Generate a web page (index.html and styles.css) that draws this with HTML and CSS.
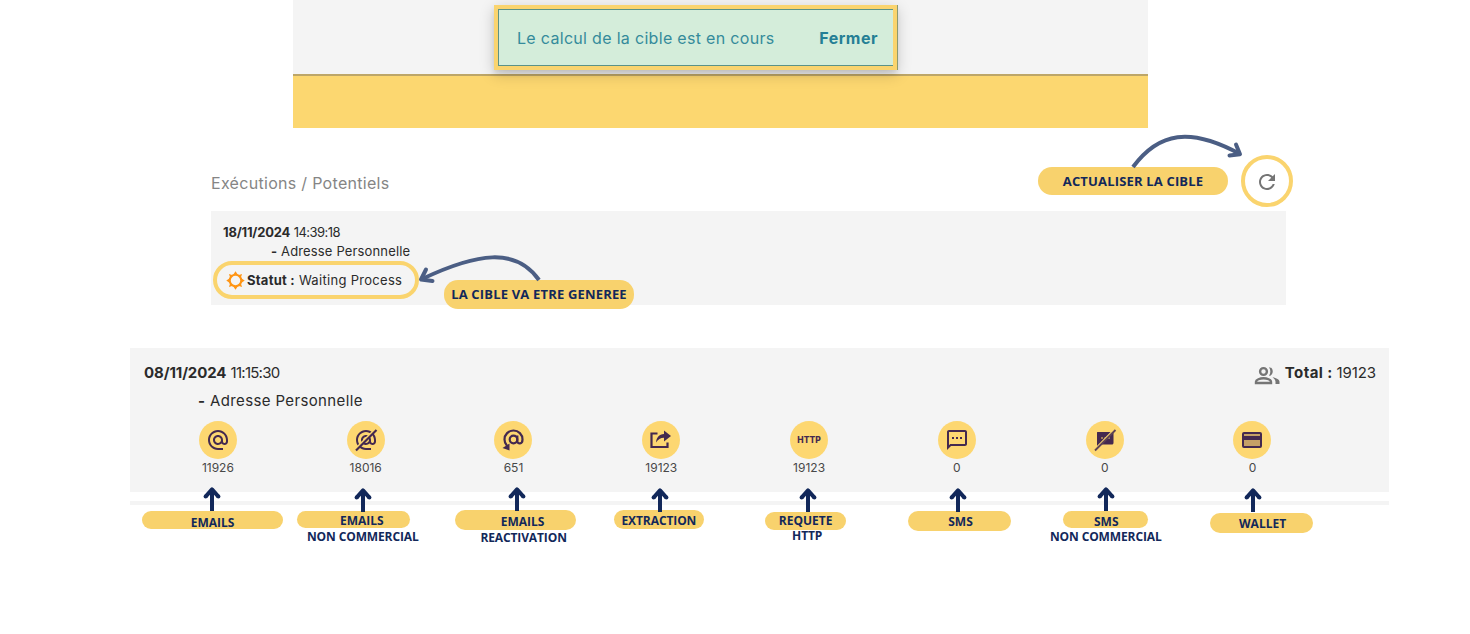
FILE: index.html
```html
<!DOCTYPE html>
<html lang="fr">
<head>
    <meta charset="UTF-8">
    <meta name="viewport" content="width=device-width, initial-scale=1.0">
    <title>Calcul de la cible</title>
    <link rel="stylesheet" href="styles.css">
</head>
<body>
    <svg width="0" height="0" class="sprite">
        <symbol id="arrow-up" viewBox="0 0 18 24">
            <path d="M9 24V3M2.6 9.6L9 2.4l6.4 7.2" fill="none" stroke="#12285a" stroke-width="4" stroke-linejoin="round"/>
            <circle cx="2.6" cy="9.6" r="2" fill="#12285a"/>
            <circle cx="15.4" cy="9.6" r="2" fill="#12285a"/>
        </symbol>
    </svg>

    <div class="banner">
        <div class="toast">
            <div class="toast-body">
                <span class="toast-text">Le calcul de la cible est en cours</span>
                <span class="toast-close">Fermer</span>
            </div>
        </div>
    </div>

    <section class="executions">
        <div class="executions-head">
            <h2>Exécutions / Potentiels</h2>
            <div class="tag tag-refresh">ACTUALISER LA CIBLE</div>
            <div class="refresh">
                <svg width="24" height="24" viewBox="0 0 24 24"><path fill="#757575" d="M17.65 6.35C16.2 4.9 14.21 4 12 4c-4.42 0-7.99 3.58-7.99 8s3.57 8 7.99 8c3.73 0 6.84-2.55 7.73-6h-2.08c-.82 2.33-3.04 4-5.65 4-3.31 0-6-2.69-6-6s2.69-6 6-6c1.66 0 3.14.69 4.22 1.78L13 11h7V4l-2.35 2.35z"/></svg>
            </div>
            <svg class="curve curve-refresh" width="120" height="40" viewBox="0 0 120 40" fill="none" stroke="#4b5e84" stroke-width="4">
                <path d="M8 37C34 2 65 -3 115 24"/>
                <path d="M111 14.5l4 9.700-10.500 1.200" stroke-linecap="round" stroke-linejoin="round"/>
            </svg>
        </div>
        <div class="panel waiting">
            <div class="run-date"><b>18/11/2024</b> <span>14:39:18</span></div>
            <div class="run-name"><b>-</b> <span>Adresse Personnelle</span></div>
            <div class="status">
                <svg width="19" height="19" viewBox="0 0 20 20" fill="#ff9514">
                    <circle cx="10" cy="10" r="6.100" fill="none" stroke="#ff9514" stroke-width="2.200"/>
                    <path d="M7.500 4L10 .3 12.500 4zM7.500 16l2.500 3.700 2.500-3.700zM4 7.500L.3 10 4 12.500zM16 7.500l3.700 2.500-3.700 2.500zM7.200 4.400L3.100 3.100l1.300 4.100zM12.800 4.400l4.100-1.300-1.300 4.100zM4.400 12.800l-1.300 4.100 4.100-1.300zM15.600 12.800l1.300 4.100-4.100-1.300z"/>
                </svg>
                <b>Statut :</b> <span>Waiting Process</span>
            </div>
            <div class="tag tag-waiting">LA CIBLE VA ETRE GENEREE</div>
            <svg class="curve curve-waiting" width="130" height="34" viewBox="0 0 130 34" fill="none" stroke="#4b5e84" stroke-width="4">
                <path d="M124 28C101 -5 62 1 7 27"/>
                <path d="M11 17.500L6 27.500l11.500 1.500" stroke-linecap="round" stroke-linejoin="round"/>
            </svg>
        </div>
    </section>

    <section class="details">
        <div class="panel result">
            <div class="result-head">
                <div class="result-date"><b>08/11/2024</b> <span>11:15:30</span></div>
                <div class="total">
                    <svg width="28" height="24" viewBox="0 0 28 24" fill="none" stroke="#757575" stroke-width="2.400">
                        <circle cx="10.500" cy="7.500" r="3.400"/>
                        <path d="M3 19v-1.300c0-2 4-3.400 7.500-3.400s7.500 1.400 7.500 3.400V19z"/>
                        <path d="M16 3.200c5 .2 5 8.400 0 8.600 1.800-2.600 1.800-6 0-8.600zM19.500 13.200c4 .8 7 2.300 7 4.500V20h-4v-2.300c0-1.900-1.500-3.400-3-4.500z" fill="#757575" stroke="none"/>
                    </svg>
                    <b>Total :</b> <span>19123</span>
                </div>
            </div>
            <div class="result-name"><b>-</b> <span>Adresse Personnelle</span></div>

            <div class="channels">
                <div class="channel">
                    <div class="dot"><svg width="24" height="24" viewBox="0 0 24 24"><path d="M12 2C6.480 2 2 6.480 2 12s4.480 10 10 10h5v-2h-5c-4.340 0-8-3.660-8-8s3.660-8 8-8 8 3.660 8 8v1.430c0 .79-.71 1.570-1.500 1.570s-1.500-.78-1.500-1.570V12c0-2.760-2.240-5-5-5s-5 2.240-5 5 2.240 5 5 5c1.380 0 2.640-.56 3.540-1.470.65.89 1.770 1.470 2.960 1.470 1.970 0 3.500-1.600 3.500-3.570V12c0-5.520-4.480-10-10-10zm0 13c-1.660 0-3-1.340-3-3s1.340-3 3-3 3 1.340 3 3-1.340 3-3 3z"/></svg></div>
                    <span>11926</span>
                </div>
                <div class="channel">
                    <div class="dot"><svg width="24" height="24" viewBox="0 0 24 24"><path d="M12 2C6.480 2 2 6.480 2 12s4.480 10 10 10h5v-2h-5c-4.340 0-8-3.660-8-8s3.660-8 8-8 8 3.660 8 8v1.430c0 .79-.71 1.570-1.500 1.570s-1.500-.78-1.500-1.570V12c0-2.760-2.240-5-5-5s-5 2.240-5 5 2.240 5 5 5c1.380 0 2.640-.56 3.540-1.470.65.89 1.770 1.470 2.960 1.470 1.970 0 3.500-1.600 3.500-3.570V12c0-5.520-4.480-10-10-10zm0 13c-1.660 0-3-1.340-3-3s1.340-3 3-3 3 1.340 3 3-1.340 3-3 3z"/><path d="M1.200 21.200L21.500 1" stroke="#fdd771" stroke-width="2"/><path d="M2 22.500L22.500 2" stroke="#44294f" stroke-width="2.200"/></svg></div>
                    <span>18016</span>
                </div>
                <div class="channel">
                    <div class="dot"><svg width="24" height="24" viewBox="0 0 24 24"><g fill="none" stroke="#44294f" stroke-width="2.200"><circle cx="12.500" cy="11.500" r="3.800"/><path d="M16.300 7.500v5.500c0 3.500 5.200 3.500 5.200-1.500 0-5-4-9-9-9s-9 4-9 9c0 2.500 1 4.700 2.500 6.300"/></g><path d="M8.500 15.500V22.500L1.500 20z"/></svg></div>
                    <span>651</span>
                </div>
                <div class="channel">
                    <div class="dot"><svg width="24" height="24" viewBox="0 0 24 24"><path d="M8.500 5.500H2.500V19h16v-4.500" fill="none" stroke="#44294f" stroke-width="2.200"/><path d="M15 2.500l7 5.500-7 5.500v-3.700c-3.500 0-6 1.700-8 4.700.5-5 3-8.300 8-8.500z"/></svg></div>
                    <span>19123</span>
                </div>
                <div class="channel">
                    <div class="dot dot-http">HTTP</div>
                    <span>19123</span>
                </div>
                <div class="channel">
                    <div class="dot"><svg width="24" height="24" viewBox="0 0 24 24"><path d="M20 2H4c-1.100 0-2 .9-2 2v18l4-4h14c1.100 0 2-.9 2-2V4c0-1.100-.9-2-2-2zm0 14H5.200L4 17.200V4h16v12zM7 9h2v2H7zm4 0h2v2h-2zm4 0h2v2h-2z"/></svg></div>
                    <span>0</span>
                </div>
                <div class="channel">
                    <div class="dot"><svg width="24" height="24" viewBox="0 0 24 24"><path d="M4.500 4h14.500c.8 0 1.500.7 1.500 1.500v9.500c0 .8-.7 1.500-1.500 1.500H7L4 19V5.500c0-.8 0-1.500.5-1.500z"/><path d="M8 9h2v2H8zm3.500 0h2v2h-2zm3.500 0h2v2h-2z" fill="#9e7d5c"/><path d="M1.500 21.500L21.500 1" stroke="#fdd771" stroke-width="1.500"/><path d="M2 22.500L22.500 2" stroke="#5e4355" stroke-width="1.800"/></svg></div>
                    <span>0</span>
                </div>
                <div class="channel">
                    <div class="dot"><svg width="24" height="24" viewBox="0 0 24 24"><rect x="3" y="5" width="18" height="14" rx="1" fill="#c5a066" stroke="#44294f" stroke-width="2"/><path d="M3 8h18v4H3z"/></svg></div>
                    <span>0</span>
                </div>
            </div>
        </div>
        <div class="divider"></div>

        <div class="callouts">
            <div class="callout emails">
                <svg width="18" height="24"><use href="#arrow-up"/></svg>
                <div class="pill"><span>EMAILS</span></div>
            </div>
            <div class="callout emails-nc">
                <svg width="18" height="24"><use href="#arrow-up"/></svg>
                <div class="pill"><span>EMAILS</span></div>
                <div class="sub">NON COMMERCIAL</div>
            </div>
            <div class="callout reactivation">
                <svg width="18" height="24"><use href="#arrow-up"/></svg>
                <div class="pill"><span>EMAILS</span></div>
                <div class="sub">REACTIVATION</div>
            </div>
            <div class="callout extraction">
                <svg width="18" height="24"><use href="#arrow-up"/></svg>
                <div class="pill"><span>EXTRACTION</span></div>
            </div>
            <div class="callout http">
                <svg width="18" height="24"><use href="#arrow-up"/></svg>
                <div class="pill"><span>REQUETE</span></div>
                <div class="sub">HTTP</div>
            </div>
            <div class="callout sms">
                <svg width="18" height="24"><use href="#arrow-up"/></svg>
                <div class="pill"><span>SMS</span></div>
            </div>
            <div class="callout sms-nc">
                <svg width="18" height="24"><use href="#arrow-up"/></svg>
                <div class="pill"><span>SMS</span></div>
                <div class="sub">NON COMMERCIAL</div>
            </div>
            <div class="callout wallet">
                <svg width="18" height="24"><use href="#arrow-up"/></svg>
                <div class="pill"><span>WALLET</span></div>
            </div>
        </div>
    </section>
</body>
</html>
```
FILE: styles.css
```css
* {
    box-sizing: border-box;
}

body {
    margin: 0;
    height: 634px;
    overflow: hidden;
    background-color: #fff;
    font-family: 'Inter', sans-serif;
    color: #2b2b2b;
}

.sprite {
    display: block;
    height: 0;
}

/* Banner */
.banner {
    width: 855px;
    height: 128px;
    margin-left: 293px;
    padding-top: 5px;
    background: linear-gradient(#f4f4f4 74px, #bda668 74px, #bda668 76px, #fcd770 76px);
}

.toast {
    width: 403px;
    height: 65px;
    margin-left: 201px;
    border: 4px solid #fad46e;
    box-shadow: 1px 0 0 #8c9a70, 0 4px 14px rgba(0, 0, 0, 0.2), 0 4px 5px rgba(0, 0, 0, 0.08);
}

.toast-body {
    display: flex;
    align-items: center;
    justify-content: space-between;
    height: 57px;
    padding: 0 15px 0 18px;
    border: 1px solid #5b9288;
    border-right: none;
    background-color: #d4edda;
    color: #348b9b;
    white-space: nowrap;
}

.toast-text {
    font-size: 16px;
    letter-spacing: 0.31px;
}

.toast-close {
    font-size: 16px;
    font-weight: 700;
    letter-spacing: 0.5px;
    color: #257f95;
}

/* Executions */
.executions {
    width: 1075px;
    margin-left: 211px;
}

.executions-head {
    position: relative;
    display: flex;
    align-items: center;
    height: 83px;
    padding-top: 23px;
}

h2 {
    flex: 1;
    margin: 0;
    padding-top: 4px;
    font-size: 16px;
    font-weight: 400;
    letter-spacing: 0.3px;
    color: #858585;
}

.tag {
    width: 190px;
    height: 28px;
    border-radius: 14px;
    background-color: #f8d26d;
    font-family: 'Open Sans', sans-serif;
    font-size: 13px;
    font-weight: 700;
    letter-spacing: 0.17px;
    line-height: 28px;
    text-align: center;
    white-space: nowrap;
    color: #12285a;
}

.refresh {
    display: flex;
    align-items: center;
    justify-content: center;
    width: 52px;
    height: 52px;
    margin: 0 -7px 0 13px;
    padding-top: 2px;
    border: 4px solid #fad46e;
    border-radius: 50%;
}

.curve {
    position: absolute;
}

.curve-refresh {
    left: 914px;
    top: 2px;
}

.panel {
    background-color: #f4f4f4;
}

.waiting {
    position: relative;
    height: 94px;
    padding: 12px 12px 0;
    font-size: 13px;
    line-height: 19px;
    white-space: nowrap;
}

.run-date b {
    letter-spacing: -0.2px;
}

.run-date span {
    letter-spacing: -0.55px;
}

.run-name {
    padding-left: 48px;
    letter-spacing: 0.15px;
}

.status {
    display: flex;
    align-items: center;
    width: 206px;
    height: 38px;
    margin: 0 0 0 -10px;
    padding-left: 9px;
    border: 4px solid #fad46e;
    border-radius: 19px;
}

.status svg {
    margin-right: 2px;
}

.status b {
    letter-spacing: 0.25px;
}

.status span {
    margin-left: 4px;
    letter-spacing: 0.3px;
}

.tag-waiting {
    position: absolute;
    left: 233px;
    top: 69px;
    height: 29px;
}

.curve-waiting {
    left: 204px;
    top: 41px;
}

/* Details */
.details {
    width: 1259px;
    margin: 43px 0 0 130px;
}

.result {
    height: 144px;
    padding: 13px 13px 0 14px;
    font-size: 15px;
    line-height: 24px;
    white-space: nowrap;
}

.result-head {
    display: flex;
    justify-content: space-between;
    height: 27px;
}

.result-date b {
    letter-spacing: -0.1px;
}

.result-date span {
    letter-spacing: -0.75px;
}

.total {
    display: flex;
    gap: 4px;
}

.total svg {
    margin-top: 3px;
}

.total b {
    letter-spacing: 0.4px;
}

.total span {
    letter-spacing: -0.1px;
}

.result-name {
    margin-top: 1px;
    padding-left: 54px;
    letter-spacing: 0.37px;
}

.channels {
    display: grid;
    grid-template-columns: repeat(8, 147.8px);
    margin-top: 8px;
}

.channel {
    display: flex;
    flex-direction: column;
    align-items: center;
    font-size: 12px;
    line-height: 18px;
    color: #484848;
}

.dot {
    display: flex;
    align-items: center;
    justify-content: center;
    width: 38px;
    height: 38px;
    border-radius: 50%;
    background-color: #fdd771;
}

.dot svg {
    fill: #44294f;
}

.dot-http {
    font-size: 8.5px;
    font-weight: 800;
    color: #44294f;
}

.divider {
    height: 4px;
    margin-top: 9px;
    background-color: #f4f4f4;
}

/* Callouts under the channels */
.callouts {
    display: grid;
    grid-template-columns: repeat(8, 147.8px);
    margin-top: -18px;
    font-family: 'Open Sans', sans-serif;
    font-size: 12px;
    font-weight: 700;
    line-height: 16px;
    white-space: nowrap;
    color: #12285a;
}

.callout svg {
    display: block;
    margin-left: calc(var(--arrow) - 9px);
}

.pill {
    display: flex;
    align-items: center;
    justify-content: center;
    border-radius: 10px;
    background-color: #f8d26d;
}

.sub {
    width: 148px;
    letter-spacing: -0.12px;
    text-align: center;
}

.emails { --arrow: 82px; }
.emails .pill { width: 141px; height: 18px; margin-left: 12px; padding-top: 5px; }

.emails-nc { --arrow: 85px; padding-top: 1px; }
.emails-nc .pill { width: 113px; height: 17px; margin: -1px 0 0 19px; padding: 2px 0 0 17px; }
.emails-nc .sub { margin: 1px 0 0 11px; }

.reactivation { --arrow: 91.5px; }
.reactivation .pill { width: 121px; height: 20px; margin: -1px 0 0 29px; padding: 3px 0 0 15px; }
.reactivation .sub { margin-left: 24px; }

.extraction { --arrow: 87px; padding-top: 1px; }
.extraction .pill { width: 90px; height: 19px; margin: -2px 0 0 40.5px; padding-top: 2px; letter-spacing: -0.1px; }

.http { --arrow: 86.5px; padding-top: 1px; }
.http .pill { width: 81px; height: 18px; margin: 0 0 0 44px; }
.http .sub { margin-left: 12px; margin-top: -2px; }

.sms { --arrow: 89.5px; padding-top: 1px; }
.sms .pill { width: 103px; height: 20px; margin: -1px 0 0 39px; padding: 2px 0 0 2px; }

.sms-nc { --arrow: 89px; }
.sms-nc .pill { width: 85px; height: 17px; margin-left: 46px; padding: 4px 0 0 2px; }
.sms-nc .sub { margin: 1px 0 0 15px; }

.wallet { --arrow: 88.5px; padding-top: 1px; }
.wallet .pill { width: 103px; height: 20px; margin: 1px 0 0 45px; padding: 2px 0 0 3px; }
```
